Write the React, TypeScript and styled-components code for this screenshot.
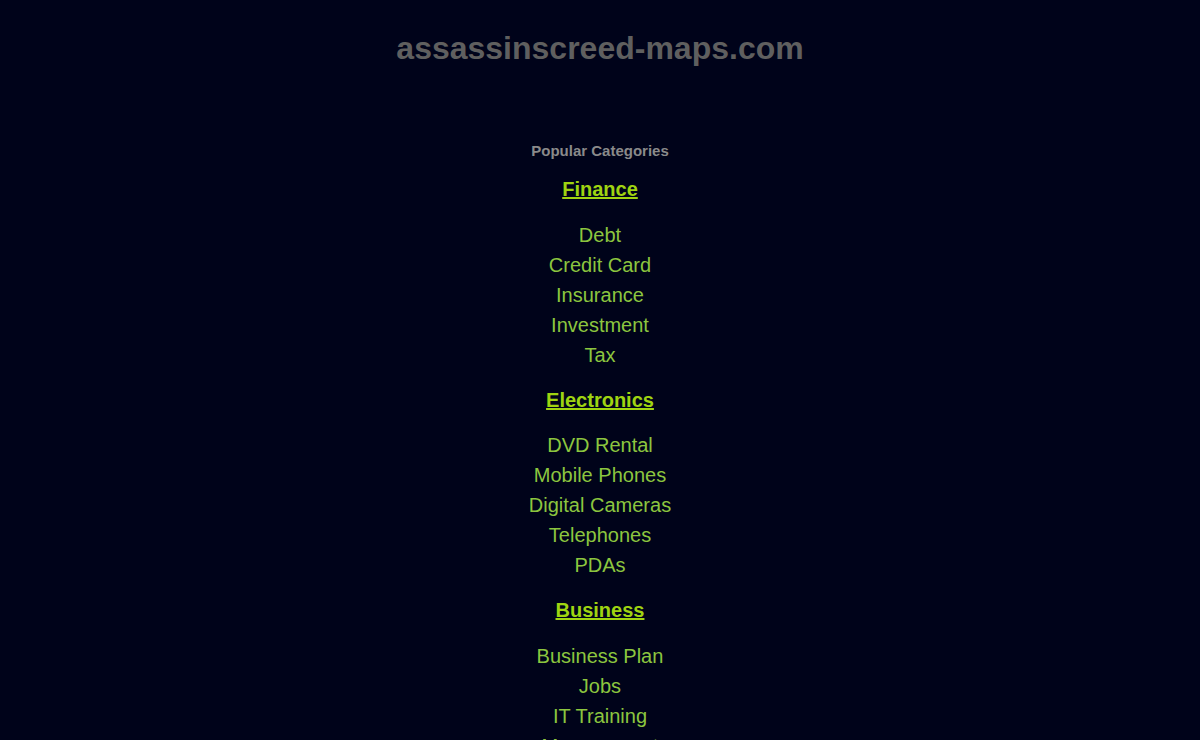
import React from "react";
import styled, { createGlobalStyle } from "styled-components";

const Global = createGlobalStyle`
  html, body { margin: 0; padding: 0; background: #00031a; }
  body { font-family: Arial, "Liberation Sans", sans-serif; }
`;

const Page = styled.div`
  min-height: 740px;
  background: #00031a;
  display: flex;
  flex-direction: column;
  align-items: center;
`;

const Title = styled.h1`
  margin: 28px 0 0;
  font-size: 32px;
  line-height: 40px;
  font-weight: bold;
  color: #5f5f5f;
  text-align: center;
`;

const Section = styled.div`
  margin-top: 73px;
  display: flex;
  flex-direction: column;
  align-items: center;
`;

const SectionLabel = styled.h2`
  margin: 0 0 13px;
  font-size: 15px;
  line-height: 20px;
  font-weight: bold;
  color: #8a8a8a;
`;

const Group = styled.div`
  display: flex;
  flex-direction: column;
  align-items: center;
`;

const Heading = styled.a`
  display: block;
  font-size: 20px;
  line-height: 30px;
  font-weight: bold;
  color: #9fd411;
  text-decoration: underline;
  margin: 0 0 15.5px;
`;

const List = styled.ul`
  list-style: none;
  margin: 0 0 15px;
  padding: 0;
  text-align: center;
`;

const Item = styled.li`
  font-size: 20px;
  line-height: 30px;
  color: #8cc63f;
`;

const ItemLink = styled.a`
  color: inherit;
  text-decoration: none;
`;

const groups = [
  { title: "Finance", items: ["Debt", "Credit Card", "Insurance", "Investment", "Tax"] },
  { title: "Electronics", items: ["DVD Rental", "Mobile Phones", "Digital Cameras", "Telephones", "PDAs"] },
  { title: "Business", items: ["Business Plan", "Jobs", "IT Training", "Management"] },
];

export default function App() {
  return (
    <>
      <Global />
      <Page>
        <Title>assassinscreed-maps.com</Title>
        <Section>
          <SectionLabel>Popular Categories</SectionLabel>
          {groups.map((g) => (
            <Group key={g.title}>
              <Heading href="#">{g.title}</Heading>
              <List>
                {g.items.map((i) => (
                  <Item key={i}>
                    <ItemLink href="#">{i}</ItemLink>
                  </Item>
                ))}
              </List>
            </Group>
          ))}
        </Section>
      </Page>
    </>
  );
}
